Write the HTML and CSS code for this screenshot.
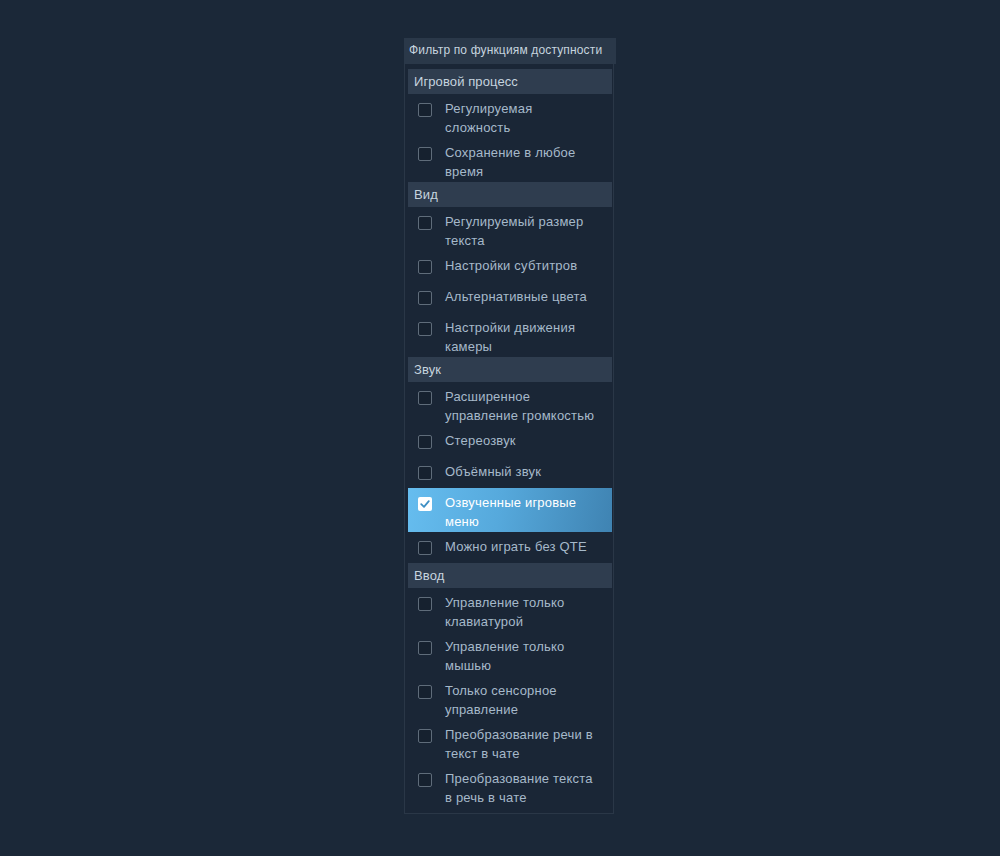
FILE: index.html
```html
<!DOCTYPE html>
<html lang="ru">
<head>
    <meta charset="UTF-8">
    <meta name="viewport" content="width=device-width, initial-scale=1.0">
    <title>Фильтр по функциям доступности</title>
    <link rel="stylesheet" href="styles.css">
</head>
<body>
    <div class="filter">
        <div class="filter-title">Фильтр по функциям доступности</div>
        <div class="filter-body">
            <div class="group-title">Игровой процесс</div>
            <div class="option"><span class="box"></span><span class="label">Регулируемая сложность</span></div>
            <div class="option"><span class="box"></span><span class="label">Сохранение в любое время</span></div>

            <div class="group-title">Вид</div>
            <div class="option"><span class="box"></span><span class="label">Регулируемый размер текста</span></div>
            <div class="option"><span class="box"></span><span class="label">Настройки субтитров</span></div>
            <div class="option"><span class="box"></span><span class="label">Альтернативные цвета</span></div>
            <div class="option"><span class="box"></span><span class="label">Настройки движения камеры</span></div>

            <div class="group-title">Звук</div>
            <div class="option"><span class="box"></span><span class="label">Расширенное управление громкостью</span></div>
            <div class="option"><span class="box"></span><span class="label">Стереозвук</span></div>
            <div class="option"><span class="box"></span><span class="label">Объёмный звук</span></div>
            <div class="option checked">
                <span class="box">
                    <svg viewBox="0 0 14 14" width="14" height="14"><path d="M3.2 7.2 L6 9.8 L10.8 4.2" fill="none" stroke="#3d8fc4" stroke-width="1.8" stroke-linecap="round" stroke-linejoin="round"/></svg>
                </span>
                <span class="label">Озвученные игровые меню</span>
            </div>
            <div class="option"><span class="box"></span><span class="label">Можно играть без QTE</span></div>

            <div class="group-title">Ввод</div>
            <div class="option"><span class="box"></span><span class="label">Управление только клавиатурой</span></div>
            <div class="option"><span class="box"></span><span class="label">Управление только мышью</span></div>
            <div class="option"><span class="box"></span><span class="label">Только сенсорное управление</span></div>
            <div class="option"><span class="box"></span><span class="label">Преобразование речи в текст в чате</span></div>
            <div class="option"><span class="box"></span><span class="label">Преобразование текста в речь в чате</span></div>
        </div>
    </div>
</body>
</html>
```

FILE: styles.css
```css
body {
    margin: 0;
    background: #1b2838;
    font-family: Arial, "Liberation Sans", sans-serif;
    font-size: 13px;
}
.filter {
    width: 212px;
    margin: 38px 0 0 404px;
}
.filter-title {
    height: 26px;
    line-height: 25px;
    padding-left: 5px;
    background: #2a3849;
    color: #c6d4df;
    font-size: 12px;
    letter-spacing: 0.15px;
    white-space: nowrap;
}
.filter-body {
    width: 210px;
    border: 1px solid #2a3747;
    border-top: none;
    padding: 5px 0 5px 3px;
    box-sizing: border-box;
    background: #1a2636;
}
.group-title {
    width: 204px;
    height: 25px;
    line-height: 25px;
    padding-left: 6px;
    box-sizing: border-box;
    background: #2f3d4f;
    color: #c6d4df;
    letter-spacing: 0.1px;
}
.option {
    display: flex;
    align-items: flex-start;
    width: 204px;
    color: #a6b9ca;
}
.box {
    flex: none;
    width: 14px;
    height: 14px;
    margin: 9px 0 8px 10px;
    border: 1px solid #5f6c7a;
    border-radius: 2px;
    box-sizing: border-box;
    background: #16212f;
}
.label {
    width: 151px;
    margin-left: 13px;
    padding: 5px 0 1px;
    line-height: 19px;
    letter-spacing: 0.2px;
}
.checked {
    background: linear-gradient(100deg, #66bdef 0%, #56a9dc 45%, #3f83b2 100%);
    color: #ffffff;
}
.checked .box {
    border: none;
    background: #ffffff;
}
.checked .box svg {
    display: block;
}
```
